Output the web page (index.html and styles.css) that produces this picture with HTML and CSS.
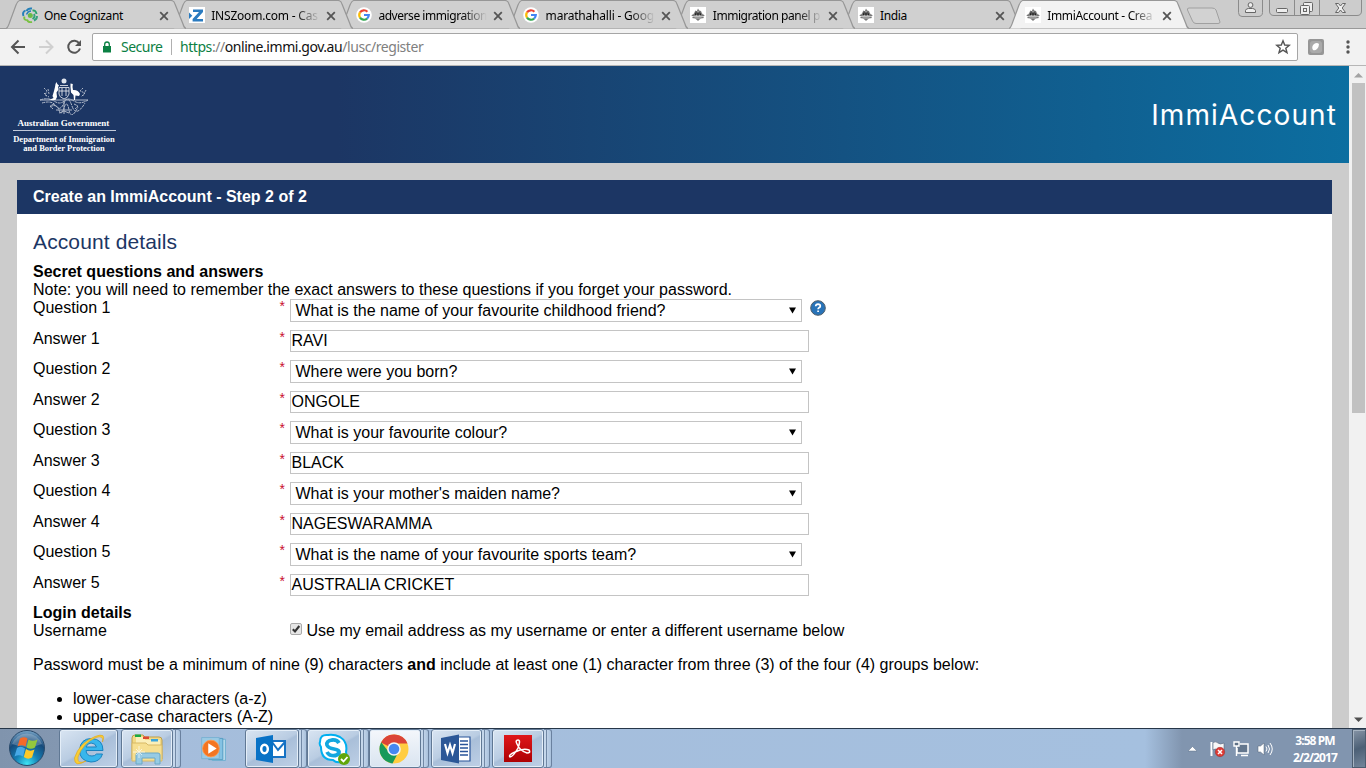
FILE: index.html
```html
<!DOCTYPE html>
<html lang="en">
<head>
<meta charset="utf-8">
<title>ImmiAccount - Create</title>
<link rel="stylesheet" href="styles.css">
</head>
<body>
<svg class="defs" width="0" height="0">
  <defs>
    <symbol id="tab" viewBox="0 0 180 29"><path d="M0 28.5 C2 28 2 26 3 24 L10 5 Q12 .5 14 .5 L165 .5 Q168 .5 169 4 L177 24 Q178 28 180 28.5" fill="inherit" stroke="#979797" stroke-width="1.2"/></symbol>
    <symbol id="close" viewBox="0 0 10 10"><path d="M1.2 1.2 8.8 8.8M8.8 1.2 1.2 8.8" stroke="#555" stroke-width="1.8"/></symbol>
    <symbol id="google" viewBox="0 0 16 16"><circle cx="8" cy="8" r="7.8" fill="#fff"/><g fill="none" stroke-width="2.2"><path d="M4 5.4A4.8 4.8 0 0 1 11.4 4.7" stroke="#ea4335"/><path d="M4 5.4A5 5 0 0 0 4 10.6" stroke="#fbbc05"/><path d="M4 10.6A4.8 4.8 0 0 0 11.1 11.6" stroke="#34a853"/><path d="M8 8H12.8Q12.7 10.3 11.1 11.6" stroke="#4285f4"/></g></symbol>
    <symbol id="crest" viewBox="0 0 16 16"><path fill="#fff" d="M0 0h16v16H0z"/><path d="M8 1.5 9.2 3.5 11 4 12 6.500 14.8 8.5 13 9.5 14 11 11 11.5 9 13 8 14 7 13 5 11.5 2 11 3.3 9.6 1.3 8.5 4 6.500 5.3 3.500 6.8 4.2Z" fill="#777"/><path d="M8 4v4M3 9.5H13M6 7.5l1 1.5M10 7.5 9 9M4.5 11H11.5M4 7.500 5 8.500M12 7.500 11 8.500" stroke="#e0e0e0" stroke-width=".7"/><path d="M4.500 8 6.400 4 6.500 8ZM11.500 8 9.600 4.500 9.500 8ZM7.200 5.500H8.800V8H7.200Z" fill="#222"/></symbol>
  </defs>
</svg>

<header class="browser">
  <div class="tabstrip">
    <div class="tab"><svg class="shape"><use href="#tab"/></svg>
      <svg class="fav" viewBox="0 0 16 16"><circle cx="8.300" cy="8.500" r="2.500" fill="#6cbb45"/><g fill="none" stroke-width="1.900"><path d="M4.500 4Q6 1 10 1.500M1.500 9Q0 5 3.500 3.500" stroke="#2580b8"/><path d="M4.500 7.500Q6 4 9 4" stroke="#2580b8" stroke-width="1.400"/><path d="M10.500 3.500Q14 3 14.500 7" stroke="#2aa36c"/><path d="M12 7Q13.500 10 10.500 12M15 9Q15 12.500 12 13.500" stroke="#36a27b"/><path d="M10 15Q6 16 5 12.500M4.500 13Q1.500 13 2.500 9.500" stroke="#7ac143"/></g></svg>
      <span class="title">One Cognizant</span><svg class="x"><use href="#close"/></svg></div>
    <div class="tab"><svg class="shape"><use href="#tab"/></svg>
      <svg class="fav" viewBox="0 0 16 16"><path fill="#fff" d="M0 0h16v16H0z"/><path d="M4 2.5H14V5L7.7 12H14V14.5H3.6V12L10 5H4Z" fill="#2a7bc0"/><path d="M0 5.5 3.3 8.7 0 12Z" fill="#2a7bc0"/></svg>
      <span class="title wide fade">INSZoom.com - Cas</span><svg class="x"><use href="#close"/></svg></div>
    <div class="tab"><svg class="shape"><use href="#tab"/></svg><svg class="fav"><use href="#google"/></svg><span class="title tight fade">adverse immigration</span><svg class="x"><use href="#close"/></svg></div>
    <div class="tab"><svg class="shape"><use href="#tab"/></svg><svg class="fav"><use href="#google"/></svg><span class="title wide fade">marathahalli - Goog</span><svg class="x"><use href="#close"/></svg></div>
    <div class="tab"><svg class="shape"><use href="#tab"/></svg><svg class="fav"><use href="#crest"/></svg><span class="title tight fade">Immigration panel p</span><svg class="x"><use href="#close"/></svg></div>
    <div class="tab"><svg class="shape"><use href="#tab"/></svg><svg class="fav"><use href="#crest"/></svg><span class="title">India</span><svg class="x"><use href="#close"/></svg></div>
    <div class="tab active"><svg class="shape"><use href="#tab"/></svg><svg class="fav"><use href="#crest"/></svg><span class="title fade">ImmiAccount - Crea</span><svg class="x"><use href="#close"/></svg></div>
    <svg class="newtab" viewBox="0 0 36 18"><path d="M3 1H26Q29 1 30 3L34 15Q34 16.500 32 16.500H10Q7.500 16.500 6.500 14L1.500 3Q1 1 3 1Z" fill="#d2d2d2" stroke="#a0a0a0"/></svg>
    <svg class="winctl" viewBox="0 0 130 18" fill="none" stroke="#8b8b8b"><path d="M1.500 -1V12.500Q1.500 16.500 5 16.500H21Q25.500 16.500 25.500 12.500V-1M32.500 -1V11Q32.500 15.500 37 15.500H120Q124.500 15.500 124.500 11V-1M57.500 0V15.500M82.500 0V15.500"/><g stroke="#666"><circle cx="13.500" cy="5" r="2.400" fill="#eee"/><path d="M8.500 12.500V10.500Q9 8.500 11.500 8.500H15.500Q18 8.500 18.500 10.500V12.500Z" fill="#eee"/><rect x="39.500" y="8.500" width="11" height="4" rx="1" fill="#eee"/><rect x="66.500" y="2.500" width="9" height="9" rx="1" fill="#eee"/><rect x="63.500" y="5.500" width="9" height="9" rx="1" fill="#eee"/><rect x="66.500" y="8.500" width="3" height="3"/><path d="M98.500 3.500H101.500L103.500 6 105.500 3.500H108.500L105.200 8 108.500 12.500H105.500L103.500 10 101.500 12.500H98.500L101.800 8Z" fill="#eee"/></g></svg>
  </div>
  <div class="toolbar">
    <svg class="nav" viewBox="0 0 84 30" fill="none" stroke-width="2"><path d="M25 15H12.500M18.500 8.500 12 15 18.500 21.500" stroke="#555"/><path d="M39 15H52M46 8.500 52.500 15 46 21.500" stroke="#d0d0d0"/><path d="M79.300 11.500A6 6 0 1 0 80 16.500" stroke="#555"/><path d="M81 8V14H75Z" fill="#555"/></svg>
    <div class="omnibox">
      <svg class="lock" viewBox="0 0 10 12"><path d="M1 5H9V11.500H1Z" fill="#0b8043"/><path d="M2.700 5V3.300A2.300 2.300 0 0 1 7.300 3.300V5" fill="none" stroke="#0b8043" stroke-width="1.300"/></svg>
      <span class="secure">Secure</span><i class="sep"></i>
      <span class="url"><b>https</b>://<em>online.immi.gov.au</em>/lusc/register</span>
      <svg class="star" viewBox="0 0 16 16"><path d="M8 1.800 9.700 6 14.300 6.300 10.800 9.200 12 13.700 8 11.200 4 13.700 5.200 9.200 1.700 6.300 6.300 6Z" fill="none" stroke="#555" stroke-width="1.400"/></svg>
    </div>
    <svg class="ext" viewBox="0 0 16 16"><rect width="16" height="16" rx="2" fill="#969696"/><rect x="2" y="2" width="12" height="12" rx="3" fill="#aaa"/><path d="M5 11Q3 8 6 5Q9 3 11 5Q11 8 9 10Q7 12 5 11Z" fill="#fff"/></svg>
    <svg class="dots" viewBox="0 0 4 14" fill="#555"><circle cx="2" cy="2" r="1.700"/><circle cx="2" cy="7" r="1.700"/><circle cx="2" cy="12" r="1.700"/></svg>
  </div>
</header>

<div class="viewport">
  <main class="page">
    <div class="banner">
      <div class="gov">
        <svg class="arms" viewBox="0 0 50 37" fill="none" stroke="#fff"><circle cx="25" cy="3" r="2.500" fill="#dfe5ee" stroke="none"/><path d="M21 7.500H29M20 9.500H30V16Q29 20 25 21Q20 19 20 16ZM20 13H30M23 10V18M27 10V18" stroke-width="1" opacity=".75"/><path d="M17.500 4 18.300 6 20 7.500 19 9 19.200 12 17.500 14.500 18 19 16.500 22H10L14.500 20 13.500 18 15 13 16 9 16.500 6Z" fill="#fff" stroke="none"/><path d="M31.500 5.500 33.800 6 33.500 9 34 12Q39 11.500 41 16L40 18 36.500 17.500 36 22H35L34.500 17 32 14.500 31.500 9Z" fill="#fff" stroke="none"/><g stroke-width="1" opacity=".65"><path d="M1 22H49" /><path d="M5 10 8 13 6 17 10 19M44 10 41 13 46 15 42 19M9 11 10 16M47 12 44 18M5 15 8 18" stroke-dasharray="2 1"/><path d="M1 22Q9 19 15 23T25 23 35 23 49 22M3 25Q13 22 17 28T25 25 33 28 46 25M11 29Q18 25 20 32T25 30 30 32 39 29M15 26 11 28 14 31M35 26 39 28 36 31" stroke-dasharray="3 .7"/><path d="M17 32H33M20 35 25 33 30 35M25 23V36"/></g></svg>
        <div class="gov1">Australian Government</div>
        <div class="gov2"><span>Department of Immigration</span><span>and Border Protection</span></div>
      </div>
      <div class="brand">ImmiAccount</div>
    </div>
    <section class="card">
      <h1>Create an ImmiAccount - Step 2 of 2</h1>
      <div class="body">
        <h2>Account details</h2>
        <h3>Secret questions and answers</h3>
        <p class="line">Note: you will need to remember the exact answers to these questions if you forget your password.</p>
        <div class="rows">
          <div class="row q"><label>Question 1</label><i>*</i><div class="select">What is the name of your favourite childhood friend?<svg viewBox="0 0 7 7"><path d="M0 .5H7L3.500 6.500Z"/></svg></div><svg class="help" viewBox="0 0 16 16"><circle cx="8" cy="8" r="7.300" fill="#2873b8" stroke="#505d68"/><path d="M5.700 6.200Q5.800 4.300 8 4.200 10.300 4.300 10.300 6.100 10.200 7.200 9 7.800 8.100 8.300 8.100 9.300M8.100 10.400V12" fill="none" stroke="#fff" stroke-width="1.700"/></svg></div>
          <div class="row a"><label>Answer 1</label><i>*</i><div class="input">RAVI</div></div>
          <div class="row q"><label>Question 2</label><i>*</i><div class="select">Where were you born?<svg viewBox="0 0 7 7"><path d="M0 .5H7L3.500 6.500Z"/></svg></div></div>
          <div class="row a"><label>Answer 2</label><i>*</i><div class="input">ONGOLE</div></div>
          <div class="row q"><label>Question 3</label><i>*</i><div class="select">What is your favourite colour?<svg viewBox="0 0 7 7"><path d="M0 .5H7L3.500 6.500Z"/></svg></div></div>
          <div class="row a"><label>Answer 3</label><i>*</i><div class="input">BLACK</div></div>
          <div class="row q"><label>Question 4</label><i>*</i><div class="select">What is your mother's maiden name?<svg viewBox="0 0 7 7"><path d="M0 .5H7L3.500 6.500Z"/></svg></div></div>
          <div class="row a"><label>Answer 4</label><i>*</i><div class="input">NAGESWARAMMA</div></div>
          <div class="row q"><label>Question 5</label><i>*</i><div class="select">What is the name of your favourite sports team?<svg viewBox="0 0 7 7"><path d="M0 .5H7L3.500 6.500Z"/></svg></div></div>
          <div class="row a"><label>Answer 5</label><i>*</i><div class="input">AUSTRALIA CRICKET</div></div>
        </div>
        <h3>Login details</h3>
        <div class="user"><span class="ulabel">Username</span><svg class="check" viewBox="0 0 12 12"><rect x=".5" y=".5" width="11" height="11" rx="1.500" fill="#e6e6e6" stroke="#aaa"/><path d="M2.800 6.200 5 8.500 9.300 3" fill="none" stroke="#333" stroke-width="2.100"/></svg><span>Use my email address as my username or enter a different username below</span></div>
        <p class="line pw">Password must be a minimum of nine (9) characters <b>and</b> include at least one (1) character from three (3) of the four (4) groups below:</p>
        <ul><li>lower-case characters (a-z)</li><li>upper-case characters (A-Z)</li></ul>
      </div>
    </section>
  </main>
  <div class="scroll"><svg viewBox="0 0 9 5"><path d="M0 4.500 4.500 0 9 4.500Z" fill="#a3a3a3"/></svg><div class="thumb"></div><svg viewBox="0 0 9 5"><path d="M0 .5H9L4.500 5Z" fill="#505050"/></svg></div>
</div>

<footer class="taskbar">
  <svg class="start" viewBox="0 0 38 38"><defs><radialGradient id="orb" cx=".5" cy=".95" r=".95"><stop offset="0" stop-color="#3de4f4"/><stop offset=".35" stop-color="#1580b5"/><stop offset=".7" stop-color="#164a7b"/><stop offset="1" stop-color="#7ba7c9"/></radialGradient></defs><circle cx="19" cy="19" r="17.500" fill="url(#orb)" stroke="#29496a"/><path d="M4 15A16 16 0 0 1 34 15Q20 21 4 15Z" fill="#fff" opacity=".23"/><path d="M12 9.500Q16 7 19.500 9.500L17.500 17.500Q13.500 15 9.500 17.500Z" fill="#f46a29"/><path d="M20.500 10.500Q24.500 13 29.500 10.500L27 18.500Q23 21 18.500 18.500Z" fill="#94c83d"/><path d="M9 19Q13 16.500 17 19.500L15 27.500Q11 25 6.500 27.500Z" fill="#48a9e6"/><path d="M18 20Q22 23 26.500 20.500L24 28.500Q20 31 15.800 28Z" fill="#fdc928"/></svg>

  <div class="task ie"><svg viewBox="0 0 34 34"><path d="M31 18.500H14Q14.500 24 20 24 23 24 24.500 22H30.500Q28 30 19 30 7.500 29 7.500 18 8.500 6.500 19.500 6.500 31 7 31 18.500ZM14 15H24.500Q23.500 11 19 11 15 11.500 14 15Z" fill="#38b6ec" stroke="#1a83bf"/><path d="M30.500 10Q35 0 23 4.500Q7 11 2.500 26Q2 36 14 29Q5 33 6 25Q11 11 24 5.500Q32 3 30.500 10Z" fill="#f9cd35" stroke="#dca51c" stroke-width=".6"/></svg></div>
  <div class="task explorer"><svg viewBox="0 0 34 34"><path d="M2 6Q2 3 5 3H13L15 5H29Q32 5 32 8V27H2Z" fill="#f2d985" stroke="#bd9d4b"/><path d="M6 5H15V8H30V25H6Z" fill="#fbefb9"/><path d="M2 11H16L18 13H32V29H2Z" fill="#f6df91" stroke="#d7b966"/><path d="M5 2.500H11V5H5Z" fill="#19a944"/><path d="M13 4.500H19V7H13Z" fill="#dc4930"/><path d="M21 7H28V9.500H21Z" fill="#3ba5dc"/><path d="M6 32V23Q6 21 8 21H28Q30 21 30 23V32H25V26H12V32Z" fill="#96cbe4" stroke="#6aa8c6"/><path d="M9 14V26M3 20H15M6 17 12 23M12 17 6 23" stroke="#fff" opacity=".65"/></svg></div><div class="stack"></div>
  <div class="task plain"><svg viewBox="0 0 34 34"><path d="M13 6H30V30H15Z" fill="#b9dcec" stroke="#6caed0"/><path d="M11 5H27V29H11Z" fill="#84c2e3" stroke="#519abf"/><path d="M3 4H23V28H3Z" fill="#9acae4" stroke="#79b0d1"/><circle cx="13.500" cy="16.500" r="9.500" fill="#f37521" stroke="#ff9b4e"/><path d="M10.500 10.500V22.500L20 16.500Z" fill="#fff"/></svg></div>
  <div class="task outlook"><svg viewBox="0 0 34 34"><path d="M17 9H31V25H17Z" fill="#fff" stroke="#1672c4" stroke-width="2"/><path d="M18 10 24 18 31 10" fill="none" stroke="#1672c4" stroke-width="2"/><path d="M2 6 19 3V31L2 28Z" fill="#0872c6"/><ellipse cx="10.500" cy="17" rx="3.300" ry="4.300" fill="none" stroke="#fff" stroke-width="2.500"/></svg></div><div class="stack"></div>
  <div class="task skype"><svg viewBox="0 0 34 34"><path d="M11 3Q3 2 3 10 2 12 4 15 4 28 16 28 19 31 24 30 31 28 29 20 31 10 23 5 17 2 11 3Z" fill="#fff" stroke="#00aff0" stroke-width="2"/><path d="M22 11Q20 7.500 15 8 9 9 10 13 11 16 17 17 23 18 22 21 19 25 13 23 11 22 10 20" fill="none" stroke="#14a7df" stroke-width="3.800"/><circle cx="27" cy="27" r="6" fill="#61a60b"/><path d="M24 27 26.500 29.500 30.500 25" fill="none" stroke="#fff" stroke-width="1.800"/></svg></div><div class="stack"></div>
  <div class="task chrome"><svg viewBox="0 0 34 34"><circle cx="17" cy="17" r="14.500" fill="#ffcd41"/><path d="M17 17 4 10.600A14.500 14.500 0 0 1 30.500 11.500H17Z" fill="#db4437"/><path d="M4.200 10.200A14.500 14.500 0 0 0 15.500 31.500L21.500 20 11 19Z" fill="#189a5a"/><circle cx="17" cy="17" r="6.800" fill="#f5f5f5"/><circle cx="17" cy="17" r="5.300" fill="#4688f1"/></svg></div><div class="stack"></div>
  <div class="task word"><svg viewBox="0 0 34 34"><path d="M18 5H31V29H18Z" fill="#fff" stroke="#295499" stroke-width="1.200"/><path d="M21 9H29M21 12.500H29M21 16H29M21 19.500H29M21 23H29" stroke="#295499" stroke-width="1.300"/><path d="M2 6 20 2.500V31.500L2 28Z" fill="#2b5797"/><path d="M6 12 8.500 21 11 13 13.500 21 16 12" fill="none" stroke="#fff" stroke-width="2.100"/></svg></div><div class="stack"></div>
  <div class="task adobe"><svg viewBox="0 0 34 34"><defs><linearGradient id="red" x2="0" y2="1"><stop stop-color="#df171a"/><stop offset="1" stop-color="#ad0003"/></linearGradient></defs><path d="M3 3H31V30H3Z" fill="url(#red)"/><path d="M17 8Q14 8 16 12 19 19 26 21 30 21 28 18 22 16 14 20 7 23 9 25 12 25 17 16 20 8 17 8Z" fill="none" stroke="#fff" stroke-width="1.500"/></svg></div><div class="stack"></div>

  <div class="tray">
    <svg class="trayicons" viewBox="0 0 90 24"><path d="M0 14 4.500 9.500 9 14Z" fill="#fff" stroke="#5d7089" stroke-width=".5"/><path d="M23.500 5V19" stroke="#fff" stroke-width="2"/><path d="M25 5.500Q28 4 30 6T36 6V13Q33 15 30 13T25 13Z" fill="#f8f8f8" stroke="#56657a" stroke-width=".6"/><circle cx="32" cy="15" r="4.700" fill="#df3b35" stroke="#962a2b" stroke-width=".5"/><path d="M30 13 34 17M34 13 30 17" stroke="#fff" stroke-width="1.500"/><path d="M52 7H60V16H49V11" fill="#64778e" stroke="#fff" stroke-width="1.500"/><path d="M46 5H51V9H46ZM48.500 9V19M53 18.500H60" fill="#5e7187" stroke="#fff" stroke-width="1.400"/><path d="M70 9H72.500L76 6V18L72.500 15H70Z" fill="#fff" stroke="#536277" stroke-width=".5"/><path d="M78 9.500Q80 12 78 14.500M80 8Q83 12 80 16M82 6Q86.500 12 82 18" fill="none" stroke="#fff"/></svg>
    <div class="clock"><span>3:58 PM</span><span>2/2/2017</span></div>
  </div>
  <div class="desk"></div>
</footer>
</body>
</html>
```
FILE: styles.css
```css
* { box-sizing: border-box; }
body { margin: 0; width: 1366px; height: 768px; overflow: hidden; display: flex; flex-direction: column; font: 16px/18px "Liberation Sans", Arial, sans-serif; color: #000; }
h1, h2, h3, p, ul { margin: 0; }
svg { display: block; flex: none; }
.defs { position: absolute; }

.browser { height: 66px; background: #f2f2f2; border-bottom: 1px solid #b6b6b6; font-family: "Noto Sans", "Open Sans", sans-serif; flex: none; }
.tabstrip { height: 29px; display: flex; padding-left: 6px; background: linear-gradient(#ccc 28px, #999 28px); }
.tab { width: 180px; height: 29px; margin-right: -12.8px; display: grid; grid-template-columns: 15.500px 16px 6.500px 111px 4px 10px; align-items: center; fill: #d0d0d0; flex: none; }
.tab:nth-child(1) { z-index: 7; }
.tab:nth-child(2) { z-index: 6; }
.tab:nth-child(3) { z-index: 5; }
.tab:nth-child(4) { z-index: 4; }
.tab:nth-child(5) { z-index: 3; }
.tab:nth-child(6) { z-index: 2; }
.tab.active { z-index: 9; fill: #f2f2f2; }
.shape { grid-area: 1 / 1 / 2 / 7; width: 180px; height: 29px; }
.fav { grid-area: 1 / 2; width: 16px; height: 16px; margin-top: 1px; }
.title { grid-area: 1 / 4; font-size: 12px; line-height: 20px; white-space: nowrap; letter-spacing: -.35px; margin-top: 2px; }
.title.tight { letter-spacing: -.45px; }
.title.wide { letter-spacing: -.2px; }
.fade { -webkit-mask-image: linear-gradient(90deg, #000 84px, transparent 109px); mask-image: linear-gradient(90deg, #000 84px, transparent 109px); }
.x { grid-area: 1 / 6; width: 10px; height: 10px; margin-top: 2px; }
.newtab { width: 36px; height: 18px; margin: 7px 0 0 10px; }
.winctl { width: 130px; height: 18px; margin-left: 15px; }

.toolbar { height: 36px; display: flex; align-items: center; }
.nav { width: 84px; height: 30px; }
.omnibox { margin-left: 8px; width: 1206px; height: 28px; border: 1px solid #a6a6a6; border-radius: 2px; background: #fff; display: flex; align-items: center; font-size: 14px; }
.lock { width: 10px; height: 12px; margin-left: 9px; }
.secure { width: 43px; margin-left: 9px; color: #0b8043; letter-spacing: -.5px; white-space: nowrap; }
.sep { width: 1px; height: 16px; background: #b0b0b0; margin: 0 8px 0 7px; }
.url { color: #808080; white-space: nowrap; letter-spacing: -.44px; }
.url b { font-weight: 400; color: #0b8043; }
.url em { font-style: normal; color: #111; }
.star { width: 16px; height: 16px; margin-left: auto; margin-right: 6px; }
.ext { width: 16px; height: 16px; margin-left: 10px; }
.dots { width: 4px; height: 14px; margin-left: 22px; }

.viewport { height: 662px; display: flex; flex: none; overflow: hidden; }
.page { width: 1349px; background: #ccc; }
.banner { height: 97px; display: flex; justify-content: space-between; background: linear-gradient(90deg, #1c3664 0, #1c3664 25%, #0c6ea0 100%); color: #fff; }
.gov { width: 103px; margin-left: 12.500px; padding-top: 12px; font: bold 9px/9px "Liberation Serif", "Times New Roman", serif; white-space: nowrap; }
.arms { width: 50px; height: 37px; margin-left: 26px; }
.gov1 { height: 12px; margin-top: 4px; padding-left: 5px; border-bottom: 1px solid #c2cada; }
.gov2 { padding-top: 4px; display: flex; flex-direction: column; align-items: center; font-size: 8.500px; }
.brand { margin: 30px 12px 0 0; font: 400 28px/39px Inter, Lato, sans-serif; letter-spacing: 1.1px; }
.card { width: 1315px; height: 548px; margin: 17px 0 0 17px; background: #fff; }
.card h1 { height: 34px; padding-left: 16px; background: #1c3664; color: #fff; font: bold 16px/33px "Liberation Sans", Arial, sans-serif; }
.body { padding: 15px 16px 0; }
.body h2 { font-weight: 400; font-size: 21px; line-height: 26px; color: #1c3664; margin-bottom: 8px; letter-spacing: .12px; }
.body h3 { font-size: 16px; line-height: 18px; }
.line { white-space: nowrap; }
.row { display: flex; align-items: flex-start; }
.row.q { height: 31px; }
.row.a { height: 30px; }
.rows { height: 305px; }
.row label { width: 246.500px; line-height: 18px; }
.row i { width: 10.500px; color: #c8102e; font: 14px/15px "Liberation Sans", Arial, sans-serif; }
.select { width: 512px; height: 23px; border: 1px solid #c4c4c4; padding: 0 5px 0 4.500px; display: flex; align-items: center; justify-content: space-between; line-height: 21px; }
.select svg { width: 7px; height: 7px; margin-top: -1px; }
.input { width: 519px; height: 22px; border: 1px solid #c4c4c4; padding-left: .5px; line-height: 20px; }
.help { width: 16px; height: 16px; margin: 1px 0 0 8px; }
.user { display: flex; }
.ulabel { width: 257px; }
.check { width: 12px; height: 12px; margin: 1px 4.500px 0 0; }
.pw { margin-top: 16px; }
ul { margin-top: 16px; padding-left: 40px; }
.scroll { width: 17px; background: #f1f1f1; display: flex; flex-direction: column; align-items: center; padding: 7px 0 6px 1px; }
.scroll svg { width: 9px; height: 5px; }
.thumb { width: 13px; height: 330px; background: #c1c1c1; margin: 5px 0 auto; }

.taskbar { height: 40px; flex: none; display: flex; border-top: 1px solid #263648; background: linear-gradient(90deg, #8094ad 0, #8397b1 58px, #a5bddb 100px, #a5c0df 1145px, #8195af 1182px, #8195af 100%); }
.start { width: 38px; height: 38px; margin-left: 8px; }
.task { height: 39px; display: flex; align-items: center; justify-content: center; border: 1px solid #607894; border-radius: 3px; background: linear-gradient(150deg, #d9e5f2, #b9cce2 48%, #a9bfd9 52%, #bed0e6); box-shadow: inset 0 0 0 1px #e4eef8; }
.task svg { width: 34px; height: 34px; }
.ie { width: 59px; margin-left: 13px; }
.explorer { width: 52px; margin-left: 3px; }
.plain { width: 62px; border: 0; background: none; box-shadow: none; }
.plain svg { width: 30px; height: 30px; margin-left: 3px; }
.outlook { width: 54px; margin-left: 2px; }
.outlook svg { margin-right: 3px; }
.skype { width: 54px; }
.skype svg { margin-right: 1px; }
.chrome { width: 52px; background: linear-gradient(#f4f7fb, #d9e4f0); }
.chrome svg, .word svg { margin-right: 2px; }
.word { width: 51px; margin-left: 2px; }
.adobe { width: 52px; margin-left: 2px; }
.stack { width: 8px; height: 39px; border: solid #6a819f; border-width: 1px 1px 1px 0; border-radius: 0 3px 3px 0; background: linear-gradient(90deg, #c5d7eb 2px, #7188a5 2px, #7188a5 3px, #c0d3e9 3px, #a9c1dc); }
.tray { margin-left: auto; display: flex; align-items: center; color: #fff; }
.trayicons { width: 90px; height: 24px; margin-right: 2px; }
.clock { width: 70px; margin-right: 2px; display: flex; flex-direction: column; align-items: center; font: bold 12px/17px "Noto Sans", sans-serif; letter-spacing: -.9px; }
.desk { width: 14px; border: 1px solid #4c5d70; background: linear-gradient(160deg, #8694a6, #4c6076 50%, #73859a); box-shadow: inset 1px 1px #a6b3c1; }
```
